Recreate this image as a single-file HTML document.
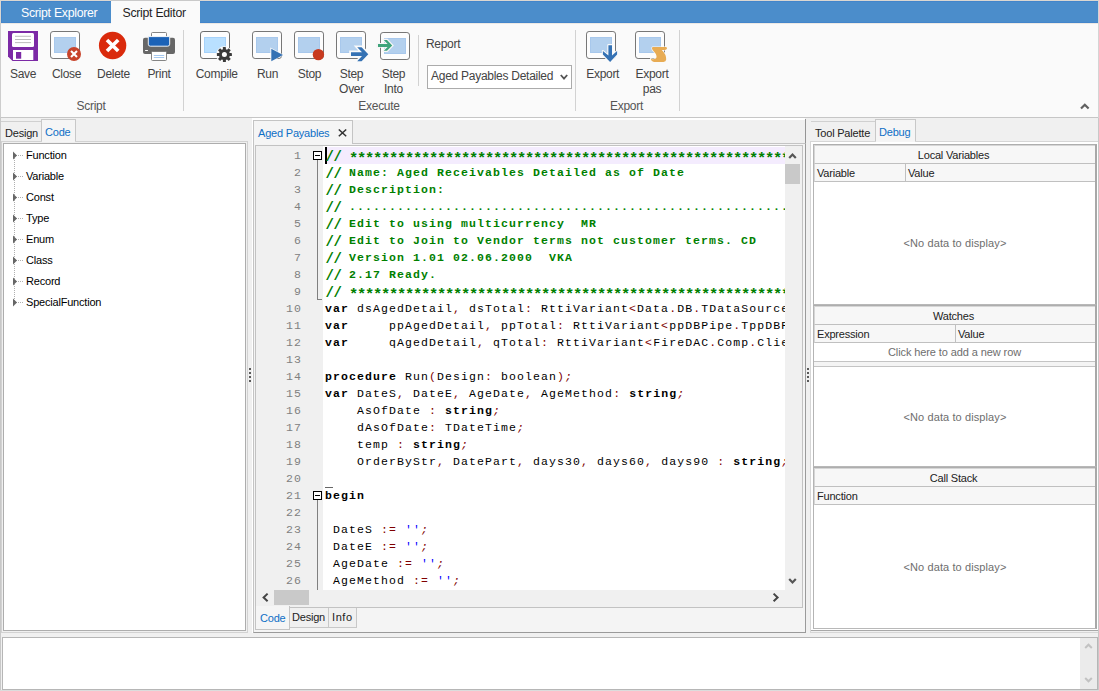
<!DOCTYPE html>
<html>
<head>
<meta charset="utf-8">
<title>Script Editor</title>
<style>
*{box-sizing:border-box;margin:0;padding:0}
html,body{width:1099px;height:691px;overflow:hidden;background:#f0f0f0;font-family:"Liberation Sans",sans-serif;}
.abs{position:absolute}
#root{position:relative;width:1099px;height:691px;overflow:hidden;background:#f0f0f0}
/* top bar */
#topbar{position:absolute;left:0;top:0;width:1099px;height:23px;background:#4b8dcb;border-top:1px solid #dbd7d1;border-left:1px solid #dbd7d1;box-shadow:inset 0 0 0 1px #4385cb}
.rtab{position:absolute;top:1px;height:22px;font-size:12.3px;line-height:24px;color:#fff;text-align:center;white-space:nowrap;letter-spacing:-0.28px}
.rtab.act{background:#fafafa;color:#1e1e1e}
#ribbon{position:absolute;left:0;top:23px;width:1099px;height:95px;background:#fafafa;border-bottom:1px solid #c6c6c6;border-left:1px solid #cdcdcd}
.rb{position:absolute;top:0;font-size:12.5px;color:#444;text-align:center;white-space:nowrap;line-height:15px}
.rb svg{position:absolute;left:50%;top:5px;margin-left:-16px}
.rb span{position:absolute;left:-20px;right:-20px;top:42px;text-align:center}
.gl{position:absolute;top:98px;width:80px;margin-left:-40px;font-size:12px;color:#555;text-align:center;line-height:15px;letter-spacing:-0.3px;margin-top:1px}
.vsep{position:absolute;width:1px;background:#d2d2d2}
.rl{position:absolute;width:80px;margin-left:-40px;margin-top:1px;text-align:center;font-size:12px;line-height:15px;color:#444;white-space:nowrap;letter-spacing:-0.3px}
/* generic small UI text */
.t11{font-size:11px;color:#222;white-space:nowrap;letter-spacing:-0.2px}
.blue{color:#0f6fc6}
.tree{color:#000}
.hd{background:#f7f7f7;border-bottom:1px solid #c0c0c0;font-size:11px;color:#222;line-height:17px;letter-spacing:-0.2px;white-space:nowrap}
.ln{position:absolute;left:2px;height:17px;line-height:17px;padding-top:1px;font-family:"Liberation Mono",monospace;font-size:11.5px;letter-spacing:1.1px;white-space:pre;color:#000}
.ln .c{color:#008000;font-weight:bold}
.ln .k{font-weight:bold}
.ln .st{font-size:15.5px;letter-spacing:-1.3px;line-height:0;position:relative;top:4px}
.ln .sl{font-size:14px;letter-spacing:-0.4px;line-height:0;position:relative;top:2px;left:0.5px}
.ln .s{color:#800000}
.ln .i{font-style:italic}
.ln .q{color:#0000ff}
.num{position:absolute;left:256px;width:46.1px;height:17px;line-height:17px;padding-top:1px;text-align:right;font-family:"Liberation Mono",monospace;font-size:11.5px;letter-spacing:1.1px;color:#808080}

</style>
</head>
<body>
<div id="root">
<!-- TOPBAR -->
<div id="topbar"></div>
<div class="rtab" style="left:21px;width:76px;text-align:left">Script Explorer</div>
<div class="rtab act" style="left:111px;width:89px;text-align:left;padding-left:11.5px">Script Editor</div>
<!-- RIBBON -->
<div id="ribbon"></div>
<div class="abs" style="left:1px;top:23px;width:1098px;height:1px;background:#ece9e4"></div>
<div class="abs" style="left:111px;top:23px;width:89px;height:1px;background:#fafafa"></div>
<div class="abs" style="left:111px;top:0;width:89px;height:1px;background:#c9c9c9"></div>
<svg width="0" height="0" style="position:absolute">
<defs>
<g id="win">
<rect x="0.5" y="0.5" width="29" height="27" rx="2.6" ry="2.6" fill="#fdfdfd" stroke="#777" stroke-width="1"/>
<rect x="4.5" y="6.5" width="21" height="15" fill="#b3d0ee" stroke="#a8c8ec" stroke-width="1"/>
</g>
</defs>
</svg>
<!-- Save -->
<svg class="abs" style="left:8px;top:31px" width="30" height="30" viewBox="0 0 30 30">
<path d="M0 0H30V30H4.5L0 25.5Z" fill="#7c2aa6"/>
<rect x="4" y="2" width="22" height="14" rx="1.5" fill="#fff"/>
<rect x="7" y="4.8" width="16" height="0.9" fill="#b5b5b5"/><rect x="7" y="8" width="16" height="0.9" fill="#b5b5b5"/><rect x="7" y="11.2" width="16" height="0.9" fill="#b5b5b5"/>
<rect x="5" y="19" width="20.3" height="10" fill="#fff"/>
<rect x="8" y="21" width="5.2" height="6.7" fill="#7c2aa6"/>
</svg>
<div class="rl" style="left:23px;top:66px">Save</div>
<!-- Close -->
<svg class="abs" style="left:50px;top:31px" width="34" height="32" viewBox="0 0 34 32">
<use href="#win"/>
<circle cx="24" cy="23" r="7" fill="#c8432a"/>
<path d="M21 20L27 26M27 20L21 26" stroke="#fff" stroke-width="2.1" stroke-linecap="butt"/>
</svg>
<div class="rl" style="left:66.5px;top:66px">Close</div>
<!-- Delete -->
<svg class="abs" style="left:98px;top:31px" width="30" height="30" viewBox="0 0 30 30">
<circle cx="14.6" cy="14.5" r="13.7" fill="#da2a0c"/>
<path d="M9 8.9L20.2 20.1M20.2 8.9L9 20.1" stroke="#fff" stroke-width="3.6"/>
</svg>
<div class="rl" style="left:113.5px;top:66px">Delete</div>
<!-- Print -->
<svg class="abs" style="left:142px;top:31px" width="34" height="31" viewBox="0 0 34 31">
<rect x="9.5" y="1.5" width="15" height="8" rx="1" fill="#fff" stroke="#777" stroke-width="0.9"/>
<rect x="1" y="6.7" width="32" height="16.3" rx="2" fill="#676767"/>
<path d="M6.3 5.6H27.7V13.2a2 2 0 0 1 -2 2H8.3a2 2 0 0 1 -2 -2Z" fill="#1b62b7" stroke="#fff" stroke-width="0.9"/>
<rect x="3.1" y="19" width="2.8" height="1" fill="#fff"/>
<rect x="9.5" y="20.5" width="15" height="9" rx="1" fill="#fff" stroke="#777" stroke-width="0.9"/>
<rect x="11.8" y="24" width="10.4" height="0.9" fill="#9cc3ee"/><rect x="11.8" y="26" width="10.4" height="0.9" fill="#9cc3ee"/>
</svg>
<div class="rl" style="left:159px;top:66px">Print</div>
<div class="vsep" style="left:183px;top:30px;height:81px"></div>
<div class="gl" style="left:91px">Script</div>
<!-- Compile -->
<svg class="abs" style="left:200px;top:31px" width="34" height="32" viewBox="0 0 34 32">
<rect x="0.5" y="0.5" width="29" height="27" rx="2.6" ry="2.6" fill="#fdfdfd" stroke="#6c6c6c" stroke-width="1"/>
<rect x="4.5" y="6.5" width="21" height="15" fill="#b9e0ff" stroke="#a6d2fa" stroke-width="1"/>
<g transform="translate(24.4 23.6)">
<circle r="8.4" fill="#fafafa"/>
<g fill="#3a3a3a">
<circle r="5.5"/>
<rect x="-1.5" y="-7.5" width="3" height="15" rx="0.4"/>
<rect x="-1.5" y="-7.5" width="3" height="15" rx="0.4" transform="rotate(45)"/>
<rect x="-1.5" y="-7.5" width="3" height="15" rx="0.4" transform="rotate(90)"/>
<rect x="-1.5" y="-7.5" width="3" height="15" rx="0.4" transform="rotate(135)"/>
</g>
<circle r="2.5" fill="#fdfdfd"/>
</g>
</svg>
<div class="rl" style="left:216.7px;top:66px">Compile</div>
<!-- Run -->
<svg class="abs" style="left:252px;top:31px" width="34" height="32" viewBox="0 0 34 32">
<use href="#win"/>
<path d="M18.4 16.5L32 24L18.4 31.3Z" fill="#fafafa"/>
<path d="M19.3 17.8L31 24L19.3 30.2Z" fill="#3572b4"/>
</svg>
<div class="rl" style="left:267.5px;top:66px">Run</div>
<!-- Stop -->
<svg class="abs" style="left:294px;top:31px" width="34" height="32" viewBox="0 0 34 32">
<use href="#win"/>
<circle cx="24.4" cy="23.6" r="5.7" fill="#c83a1f"/>
</svg>
<div class="rl" style="left:309.5px;top:66px">Stop</div>
<!-- Step Over -->
<svg class="abs" style="left:336px;top:31px" width="36" height="32" viewBox="0 0 36 32">
<use href="#win"/>
<path d="M14 20.3H24L19.5 15.3H26L33.4 23.2L26 31.1H19.5L24 25.9H14Z" fill="#fafafa" stroke="#fafafa" stroke-width="1.6"/>
<path d="M15 21.3H26L21.2 16.2H25.6L32.3 23.2L25.6 30.2H21.2L26 24.9H15Z" fill="#3572b4"/>
</svg>
<div class="rl" style="left:351.5px;top:66px">Step<br>Over</div>
<!-- Step Into -->
<svg class="abs" style="left:376px;top:32px" width="36" height="30" viewBox="0 0 36 30">
<g transform="translate(4 0)"><rect x="0.5" y="0.5" width="29" height="27" rx="2.6" ry="2.6" fill="#fdfdfd" stroke="#777" stroke-width="1"/>
<rect x="4.5" y="6.5" width="21" height="15" fill="#b3d0ee" stroke="#a8c8ec" stroke-width="1"/></g>
<path d="M1 11.8H11L7.2 7.5H11.2L16.8 13.4L11.2 19.3H7.2L11 15H1Z" fill="#fafafa" stroke="#f6f6f6" stroke-width="1.6"/>
<path d="M2 11.9H11.6L7.8 8H11L16.2 13.4L11 18.8H7.8L11.6 14.9H2Z" fill="#3fa47b"/>
</svg>
<div class="rl" style="left:393.5px;top:66px">Step<br>Into</div>
<div class="gl" style="left:379px">Execute</div>
<div class="vsep" style="left:418px;top:35px;height:51px"></div>
<div class="abs" style="left:426px;top:37px;font-size:12px;line-height:15px;color:#444;letter-spacing:-0.3px">Report</div>
<div class="abs" style="left:427px;top:65px;width:145px;height:24px;border:1px solid #ababab;background:#fff;font-size:12px;line-height:20px;color:#444;padding-left:3px;white-space:nowrap;letter-spacing:-0.27px">Aged Payables Detailed
<svg class="abs" style="left:132px;top:8px" width="8" height="7" viewBox="0 0 8 7"><path d="M0.8 1L4 4.6L7.2 1" fill="none" stroke="#555" stroke-width="1.8"/></svg></div>
<div class="vsep" style="left:575px;top:30px;height:81px"></div>
<!-- Export -->
<svg class="abs" style="left:586px;top:31px" width="34" height="33" viewBox="0 0 34 33">
<use href="#win"/>
<path d="M22.4 14.2H26V24.6L31.1 20V23.6L24.1 30.9L16.9 23.6V20L22.4 24.6Z" fill="#fafafa" stroke="#fafafa" stroke-width="2.2" stroke-linejoin="round"/>
<path d="M22.4 14.2H26V24.6L31.1 20V23.6L24.1 30.9L16.9 23.6V20L22.4 24.6Z" fill="#3572b4"/>
</svg>
<div class="rl" style="left:602.7px;top:66px">Export</div>
<!-- Export pas -->
<svg class="abs" style="left:635px;top:31px" width="34" height="33" viewBox="0 0 34 33">
<use href="#win"/>
<path d="M17.6 16H30.8Q32.4 16 32 17.6Q31.6 19 30 19H26.8Q31.4 23.5 31.2 28.5Q31 30.9 28.5 30.9H19Q16.5 30.9 15.7 27.6Q17 28.6 19 28Q22 27.5 21.5 25Q21 22.5 18.5 20Q16 17.5 17.6 16Z" fill="#e8ac54" stroke="#fafafa" stroke-width="1.2" paint-order="stroke"/>
</svg>
<div class="rl" style="left:652px;top:66px">Export<br>pas</div>
<div class="gl" style="left:626.5px">Export</div>
<div class="vsep" style="left:679px;top:30px;height:81px"></div>
<svg class="abs" style="left:1079px;top:102px" width="12" height="9" viewBox="0 0 12 9"><path d="M2 6.5L5.8 2.7L9.6 6.5" fill="none" stroke="#606060" stroke-width="2.2"/></svg>
<div class="abs" style="left:1098px;top:0;width:1px;height:118px;background:#d4d4d4"></div>

<!--/RIBBONCONTENT-->
<!--PANELS-->
<!-- LEFT PANEL -->
<div class="abs" style="left:1px;top:121px;width:41px;height:21px;border-top:1px solid #d0d0d0"></div>
<div class="abs t11" style="left:5px;top:126px;line-height:14px">Design</div>
<div class="abs" style="left:41px;top:119px;width:35px;height:23px;border:1px solid #c8c8c8;border-bottom:none;background:#f5f5f5"></div>
<div class="abs t11 blue" style="left:45px;top:125px;line-height:14px">Code</div>
<div class="abs" style="left:1px;top:141px;width:247px;height:492px;border:1px solid #d2d2d2"></div>
<div class="abs" style="left:42px;top:141px;width:33px;height:1px;background:#f5f5f5"></div>
<div class="abs" style="left:3px;top:143px;width:243px;height:488px;border:1px solid #adadad;background:#fff"></div>
<div class="abs" style="left:14px;top:155px;width:0;height:148px;border-left:1px dotted #b0b0b0"></div>
<div class="abs" style="left:15px;top:155px;width:8px;height:0;border-top:1px dotted #b0b0b0"></div>
<svg class="abs" style="left:13px;top:151px" width="5" height="9" viewBox="0 0 5 9"><path d="M0 0.5L4 4.5L0 8.5Z" fill="#666"/></svg>
<div class="abs t11 tree" style="left:26px;top:148px;line-height:14px">Function</div>
<div class="abs" style="left:15px;top:176px;width:8px;height:0;border-top:1px dotted #b0b0b0"></div>
<svg class="abs" style="left:13px;top:172px" width="5" height="9" viewBox="0 0 5 9"><path d="M0 0.5L4 4.5L0 8.5Z" fill="#666"/></svg>
<div class="abs t11 tree" style="left:26px;top:169px;line-height:14px">Variable</div>
<div class="abs" style="left:15px;top:197px;width:8px;height:0;border-top:1px dotted #b0b0b0"></div>
<svg class="abs" style="left:13px;top:193px" width="5" height="9" viewBox="0 0 5 9"><path d="M0 0.5L4 4.5L0 8.5Z" fill="#666"/></svg>
<div class="abs t11 tree" style="left:26px;top:190px;line-height:14px">Const</div>
<div class="abs" style="left:15px;top:218px;width:8px;height:0;border-top:1px dotted #b0b0b0"></div>
<svg class="abs" style="left:13px;top:214px" width="5" height="9" viewBox="0 0 5 9"><path d="M0 0.5L4 4.5L0 8.5Z" fill="#666"/></svg>
<div class="abs t11 tree" style="left:26px;top:211px;line-height:14px">Type</div>
<div class="abs" style="left:15px;top:239px;width:8px;height:0;border-top:1px dotted #b0b0b0"></div>
<svg class="abs" style="left:13px;top:235px" width="5" height="9" viewBox="0 0 5 9"><path d="M0 0.5L4 4.5L0 8.5Z" fill="#666"/></svg>
<div class="abs t11 tree" style="left:26px;top:232px;line-height:14px">Enum</div>
<div class="abs" style="left:15px;top:260px;width:8px;height:0;border-top:1px dotted #b0b0b0"></div>
<svg class="abs" style="left:13px;top:256px" width="5" height="9" viewBox="0 0 5 9"><path d="M0 0.5L4 4.5L0 8.5Z" fill="#666"/></svg>
<div class="abs t11 tree" style="left:26px;top:253px;line-height:14px">Class</div>
<div class="abs" style="left:15px;top:281px;width:8px;height:0;border-top:1px dotted #b0b0b0"></div>
<svg class="abs" style="left:13px;top:277px" width="5" height="9" viewBox="0 0 5 9"><path d="M0 0.5L4 4.5L0 8.5Z" fill="#666"/></svg>
<div class="abs t11 tree" style="left:26px;top:274px;line-height:14px">Record</div>
<div class="abs" style="left:15px;top:302px;width:8px;height:0;border-top:1px dotted #b0b0b0"></div>
<svg class="abs" style="left:13px;top:298px" width="5" height="9" viewBox="0 0 5 9"><path d="M0 0.5L4 4.5L0 8.5Z" fill="#666"/></svg>
<div class="abs t11 tree" style="left:26px;top:295px;line-height:14px">SpecialFunction</div>
<div class="abs" style="left:249px;top:368px;width:2px;height:2px;background:#5a5a5a"></div>
<div class="abs" style="left:249px;top:372px;width:2px;height:2px;background:#5a5a5a"></div>
<div class="abs" style="left:249px;top:376px;width:2px;height:2px;background:#5a5a5a"></div>
<div class="abs" style="left:249px;top:380px;width:2px;height:2px;background:#5a5a5a"></div>
<!-- CENTER PANEL -->
<div class="abs" style="left:252px;top:118px;width:553px;height:2px;background:#fff"></div>
<div class="abs" style="left:252px;top:118px;width:1px;height:515px;background:#fff"></div>
<div class="abs" style="left:805px;top:119px;width:1px;height:514px;background:#959595"></div>
<div class="abs" style="left:253px;top:143px;width:553px;height:490px;border:1px solid #c4c4c4;border-right-color:#9a9a9a;border-bottom-color:#9a9a9a;background:#f4f4f4"></div>
<div class="abs" style="left:253px;top:120px;width:100px;height:24px;border:1px solid #c4c4c4;border-bottom:none;background:#f5f5f5"></div>
<div class="abs t11 blue" style="left:258px;top:126px;line-height:14px">Aged Payables</div>
<svg class="abs" style="left:338px;top:129px" width="9" height="8" viewBox="0 0 9 8"><path d="M0.8 0.5L8.2 7.2M8.2 0.5L0.8 7.2" stroke="#333" stroke-width="1.5" fill="none"/></svg>
<div class="abs" style="left:255px;top:145px;width:548px;height:463px;border:1px solid #c2c2c2;background:#f0f0f0"></div>
<div id="code" class="abs" style="left:323px;top:146px;width:462px;height:444px;background:#fff;overflow:hidden">
<div class="abs" style="left:2px;top:1px;width:460px;height:17px;background:#f4ecfe"></div>
<div class="abs" style="left:2px;top:1px;width:2px;height:17px;background:#000"></div>
<div class="ln" style="top:0px"><span class="c sl">//</span><span class="c"> </span><span class="c st">**********************************************************************</span></div>
<div class="ln" style="top:17px"><span class="c sl">//</span><span class="c"> Name: Aged Receivables Detailed as of Date</span></div>
<div class="ln" style="top:34px"><span class="c sl">//</span><span class="c"> Description:</span></div>
<div class="ln" style="top:51px"><span class="c sl">//</span><span class="c"> ......................................................................</span></div>
<div class="ln" style="top:68px"><span class="c sl">//</span><span class="c"> Edit to using multicurrency  MR</span></div>
<div class="ln" style="top:85px"><span class="c sl">//</span><span class="c"> Edit to Join to Vendor terms not customer terms. CD</span></div>
<div class="ln" style="top:102px"><span class="c sl">//</span><span class="c"> Version 1.01 02.06.2000  VKA</span></div>
<div class="ln" style="top:119px"><span class="c sl">//</span><span class="c"> 2.17 Ready.</span></div>
<div class="ln" style="top:136px"><span class="c sl">//</span><span class="c"> </span><span class="c st">**********************************************************************</span></div>
<div class="ln" style="top:153px"><span class="k">var</span> dsAgedDetail<span class="s">,</span> dsTotal<span class="s">:</span> RttiVariant<span class="s">&lt;</span>Data<span class="s">.</span>DB<span class="s">.</span>TDataSource<span class="s">&gt;;</span></div>
<div class="ln" style="top:170px"><span class="k">var</span>     ppAgedDetail<span class="s">,</span> ppTotal<span class="s">:</span> RttiVariant<span class="s">&lt;</span>ppDBPipe<span class="s">.</span>TppDBPipeline<span class="s">&gt;;</span></div>
<div class="ln" style="top:187px"><span class="k">var</span>     qAgedDetail<span class="s">,</span> qTotal<span class="s">:</span> RttiVariant<span class="s">&lt;</span>FireDAC<span class="s">.</span>Comp<span class="s">.</span>Client<span class="s">.</span>TFDQuery<span class="s">&gt;;</span></div>
<div class="ln" style="top:204px"></div>
<div class="ln" style="top:221px"><span class="k">procedure</span> Run<span class="s">(</span>Design<span class="s">:</span> boolean<span class="s">)</span><span class="s i">;</span></div>
<div class="ln" style="top:238px"><span class="k">var</span> DateS<span class="s">,</span> DateE<span class="s">,</span> AgeDate<span class="s">,</span> AgeMethod<span class="s">:</span> <span class="k">string</span><span class="s i">;</span></div>
<div class="ln" style="top:255px">    AsOfDate <span class="s">:</span> <span class="k">string</span><span class="s i">;</span></div>
<div class="ln" style="top:272px">    dAsOfDate<span class="s">:</span> TDateTime<span class="s i">;</span></div>
<div class="ln" style="top:289px">    temp <span class="s">:</span> <span class="k">string</span><span class="s i">;</span></div>
<div class="ln" style="top:306px">    OrderByStr<span class="s">,</span> DatePart<span class="s">,</span> days30<span class="s">,</span> days60<span class="s">,</span> days90 <span class="s">:</span> <span class="k">string</span><span class="s i">;</span></div>
<div class="ln" style="top:323px"></div>
<div class="ln" style="top:340px"><span class="k">begin</span></div>
<div class="ln" style="top:357px"></div>
<div class="ln" style="top:374px"> DateS <span class="s">:=</span> <span class="q">&#x27;&#x27;</span><span class="s i">;</span></div>
<div class="ln" style="top:391px"> DateE <span class="s">:=</span> <span class="q">&#x27;&#x27;</span><span class="s i">;</span></div>
<div class="ln" style="top:408px"> AgeDate <span class="s">:=</span> <span class="q">&#x27;&#x27;</span><span class="s i">;</span></div>
<div class="ln" style="top:425px"> AgeMethod <span class="s">:=</span> <span class="q">&#x27;&#x27;</span><span class="s i">;</span></div>
<div class="abs" style="left:2px;top:341px;width:8px;height:1px;background:#666"></div>
</div>
<div class="num" style="top:146px">1</div>
<div class="num" style="top:163px">2</div>
<div class="num" style="top:180px">3</div>
<div class="num" style="top:197px">4</div>
<div class="num" style="top:214px">5</div>
<div class="num" style="top:231px">6</div>
<div class="num" style="top:248px">7</div>
<div class="num" style="top:265px">8</div>
<div class="num" style="top:282px">9</div>
<div class="num" style="top:299px">10</div>
<div class="num" style="top:316px">11</div>
<div class="num" style="top:333px">12</div>
<div class="num" style="top:350px">13</div>
<div class="num" style="top:367px">14</div>
<div class="num" style="top:384px">15</div>
<div class="num" style="top:401px">16</div>
<div class="num" style="top:418px">17</div>
<div class="num" style="top:435px">18</div>
<div class="num" style="top:452px">19</div>
<div class="num" style="top:469px">20</div>
<div class="num" style="top:486px">21</div>
<div class="num" style="top:503px">22</div>
<div class="num" style="top:520px">23</div>
<div class="num" style="top:537px">24</div>
<div class="num" style="top:554px">25</div>
<div class="num" style="top:571px">26</div>
<div class="abs" style="left:313px;top:151px;width:9px;height:9px;border:1px solid #000;background:#fff"></div>
<div class="abs" style="left:315px;top:155px;width:5px;height:1px;background:#000"></div>
<div class="abs" style="left:317px;top:160px;width:1px;height:140px;background:#808080"></div>
<div class="abs" style="left:317px;top:299px;width:5px;height:1px;background:#808080"></div>
<div class="abs" style="left:313px;top:491px;width:9px;height:9px;border:1px solid #000;background:#fff"></div>
<div class="abs" style="left:315px;top:495px;width:5px;height:1px;background:#000"></div>
<div class="abs" style="left:317px;top:500px;width:1px;height:90px;background:#808080"></div>
<div class="abs" style="left:785px;top:146px;width:17px;height:444px;background:#f0f0f0"></div>
<div class="abs" style="left:785px;top:164px;width:15px;height:20px;background:#c9c9c9"></div>
<svg class="abs" style="left:788px;top:152px" width="9" height="8" viewBox="0 0 9 8"><path d="M1.2 6L4.5 2.6L7.8 6" fill="none" stroke="#555" stroke-width="2.2"/></svg>
<svg class="abs" style="left:788px;top:577px" width="9" height="8" viewBox="0 0 9 8"><path d="M1.2 2L4.5 5.4L7.8 2" fill="none" stroke="#555" stroke-width="2.2"/></svg>
<div class="abs" style="left:256px;top:590px;width:546px;height:17px;background:#f0f0f0"></div>
<div class="abs" style="left:274px;top:590px;width:35px;height:15px;background:#c9c9c9"></div>
<svg class="abs" style="left:261px;top:592px" width="8" height="10" viewBox="0 0 8 10"><path d="M6.6 1.6L2.6 5.4L6.6 9.2" fill="none" stroke="#444" stroke-width="2"/></svg>
<svg class="abs" style="left:772px;top:592px" width="8" height="10" viewBox="0 0 8 10"><path d="M1.6 1.6L5.6 5.4L1.6 9.2" fill="none" stroke="#444" stroke-width="2"/></svg>
<div class="abs" style="left:255px;top:606px;width:35px;height:24px;border:1px solid #c4c4c4;border-top:none;background:#f5f5f5"></div>
<div class="abs t11 blue" style="left:260px;top:611px;line-height:14px">Code</div>
<div class="abs" style="left:290px;top:608px;width:39px;height:20px;border:1px solid #c8c8c8;border-left:none;border-top:none;background:#f0f0f0"></div>
<div class="abs t11" style="left:292px;top:610px;line-height:14px">Design</div>
<div class="abs" style="left:329px;top:608px;width:28px;height:20px;border:1px solid #c8c8c8;border-left:none;border-top:none;background:#f0f0f0"></div>
<div class="abs t11" style="left:332px;top:610px;line-height:14px;letter-spacing:0.6px">Info</div>
<div class="abs" style="left:807px;top:368px;width:2px;height:2px;background:#5a5a5a"></div>
<div class="abs" style="left:807px;top:372px;width:2px;height:2px;background:#5a5a5a"></div>
<div class="abs" style="left:807px;top:376px;width:2px;height:2px;background:#5a5a5a"></div>
<div class="abs" style="left:807px;top:380px;width:2px;height:2px;background:#5a5a5a"></div>
<!-- RIGHT PANEL -->
<div class="abs" style="left:811px;top:121px;width:65px;height:1px;background:#d0d0d0"></div>
<div class="abs t11" style="left:815px;top:126px;line-height:14px">Tool Palette</div>
<div class="abs" style="left:875px;top:119px;width:41px;height:23px;border:1px solid #c8c8c8;border-bottom:none;background:#f5f5f5"></div>
<div class="abs t11 blue" style="left:879px;top:125px;line-height:14px">Debug</div>
<div class="abs" style="left:810px;top:141px;width:288px;height:492px;border:1px solid #d6d6d6;border-right:none;background:#fff"></div>
<div class="abs" style="left:811px;top:630px;width:287px;height:1px;background:#a8a8a8"></div>
<div class="abs" style="left:811px;top:631px;width:287px;height:1px;background:#f0f0f0"></div>
<div class="abs" style="left:876px;top:141px;width:39px;height:1px;background:#f5f5f5"></div>
<div class="abs" style="left:813px;top:144px;width:284px;height:161px;border:1px solid #b4b4b4;border-top-color:#aeaeae;border-right:2px solid #a8a8a8;border-bottom-color:#b8b8b8;background:#fff"></div>
<div class="abs hd" style="left:814px;top:145px;width:281px;height:19px;border-left:1px solid #d6d6d6;border-top:1px solid #d6d6d6"></div>
<div class="abs t11" style="left:814px;top:148px;width:279px;text-align:center;line-height:14px">Local Variables</div>
<div class="abs hd" style="left:814px;top:164px;width:281px;height:18px;border-left:1px solid #d6d6d6"></div>
<div class="abs t11" style="left:817px;top:166px;line-height:14px">Variable</div>
<div class="abs t11" style="left:908px;top:166px;line-height:14px">Value</div>
<div class="abs" style="left:905px;top:164px;width:1px;height:17px;background:#c0c0c0"></div>
<div class="abs t11" style="left:814px;top:236px;width:282px;text-align:center;line-height:14px;color:#6e6e6e;letter-spacing:0.1px">&lt;No data to display&gt;</div>
<div class="abs" style="left:813px;top:305px;width:284px;height:162px;border:1px solid #b4b4b4;border-top-color:#aeaeae;border-right:2px solid #a8a8a8;border-bottom-color:#b8b8b8;background:#fff"></div>
<div class="abs hd" style="left:814px;top:306px;width:281px;height:19px;border-left:1px solid #d6d6d6;border-top:1px solid #d6d6d6"></div>
<div class="abs t11" style="left:814px;top:309px;width:279px;text-align:center;line-height:14px">Watches</div>
<div class="abs hd" style="left:814px;top:325px;width:281px;height:18px;border-left:1px solid #d6d6d6"></div>
<div class="abs t11" style="left:817px;top:327px;line-height:14px">Expression</div>
<div class="abs t11" style="left:958px;top:327px;line-height:14px">Value</div>
<div class="abs" style="left:955px;top:325px;width:1px;height:17px;background:#c0c0c0"></div>
<div class="abs t11" style="left:814px;top:343px;width:281px;height:19px;border-bottom:1px solid #c4c4c4;text-align:center;line-height:18px;color:#6e6e6e;letter-spacing:-0.1px">Click here to add a new row</div>
<div class="abs" style="left:814px;top:362px;width:281px;height:5px;border-bottom:1px solid #c4c4c4;background:#f4f4f4"></div>
<div class="abs t11" style="left:814px;top:410px;width:282px;text-align:center;line-height:14px;color:#6e6e6e;letter-spacing:0.1px">&lt;No data to display&gt;</div>
<div class="abs" style="left:813px;top:467px;width:284px;height:162px;border:1px solid #b4b4b4;border-top-color:#aeaeae;border-right:2px solid #a8a8a8;border-bottom-color:#b8b8b8;background:#fff"></div>
<div class="abs hd" style="left:814px;top:468px;width:281px;height:19px;border-left:1px solid #d6d6d6;border-top:1px solid #d6d6d6"></div>
<div class="abs t11" style="left:814px;top:471px;width:279px;text-align:center;line-height:14px">Call Stack</div>
<div class="abs hd" style="left:814px;top:487px;width:281px;height:18px;border-left:1px solid #d6d6d6"></div>
<div class="abs t11" style="left:817px;top:489px;line-height:14px">Function</div>
<div class="abs t11" style="left:814px;top:560px;width:282px;text-align:center;line-height:14px;color:#6e6e6e;letter-spacing:0.1px">&lt;No data to display&gt;</div>
<!-- BOTTOM PANEL -->
<div class="abs" style="left:2px;top:637px;width:1096px;height:53px;border:1px solid #b6b6b6;background:#fff"></div>
<div class="abs" style="left:1080px;top:638px;width:17px;height:51px;background:#ebebeb"></div>
<svg class="abs" style="left:1084px;top:642px" width="9" height="8" viewBox="0 0 9 8"><path d="M1.2 6L4.5 2.7L7.8 6" fill="none" stroke="#c2c2c2" stroke-width="2"/></svg>
<svg class="abs" style="left:1084px;top:676px" width="9" height="8" viewBox="0 0 9 8"><path d="M1.2 2L4.5 5.3L7.8 2" fill="none" stroke="#c2c2c2" stroke-width="2"/></svg>
<div class="abs" style="left:0;top:118px;width:1px;height:573px;background:#c8c8c8"></div>
<div class="abs" style="left:1098px;top:118px;width:1px;height:573px;background:#c8c8c8"></div>
<div class="abs" style="left:0;top:690px;width:1099px;height:1px;background:#dcdcdc"></div>
<!--/PANELS-->
</div>
</body>
</html>
